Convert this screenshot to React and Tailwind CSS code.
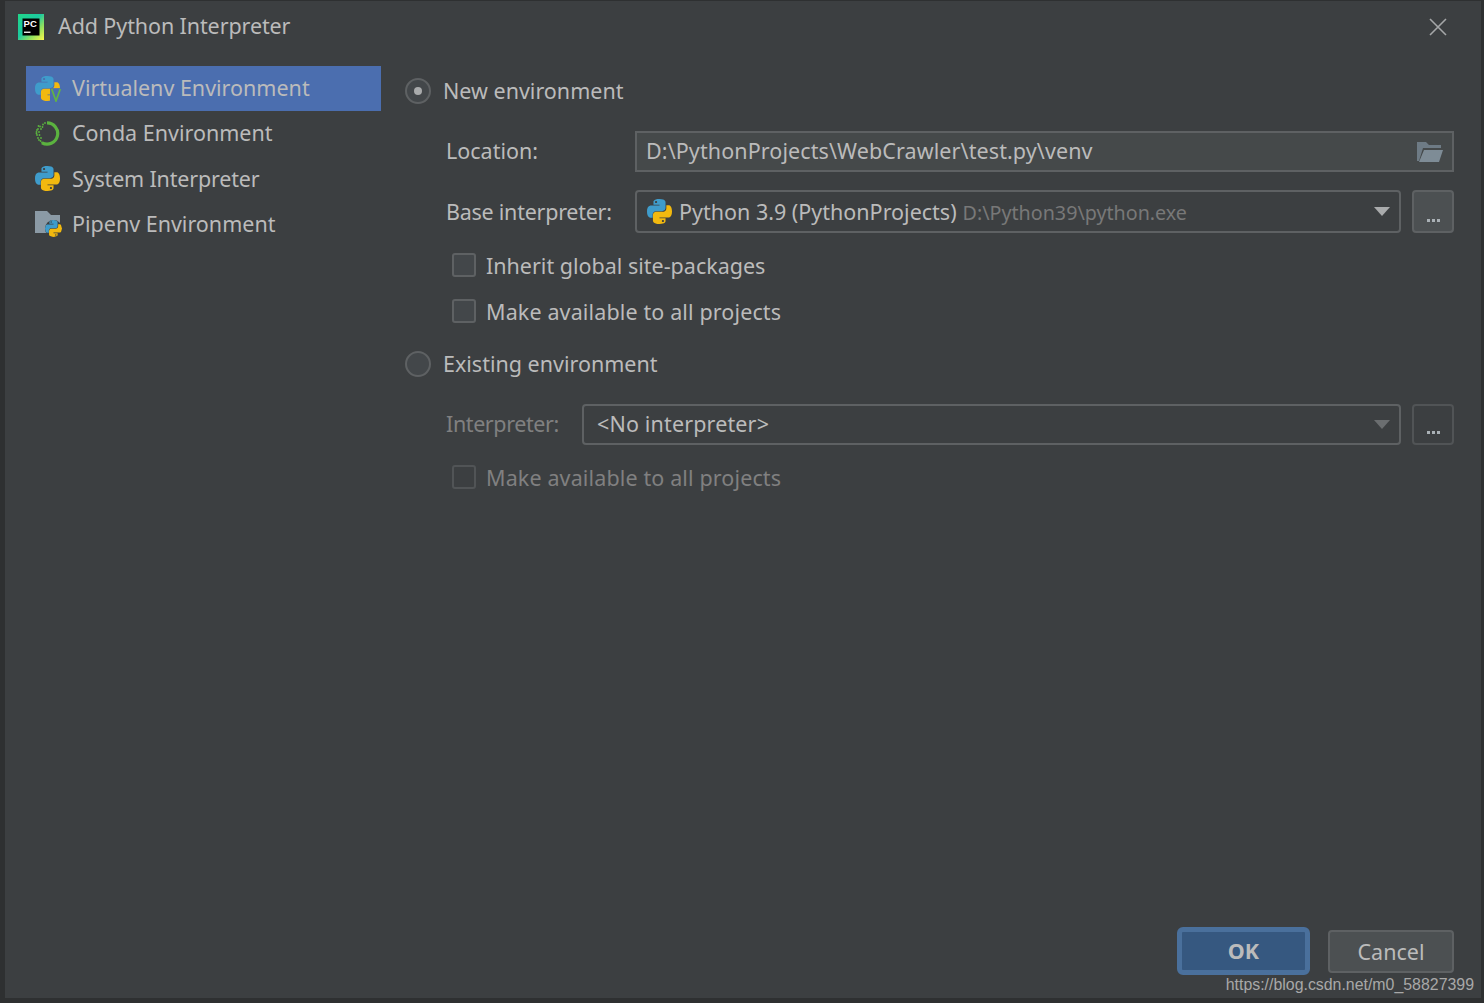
const font = { fontFamily: '"Noto Sans", sans-serif' };

function PythonIcon({ className }) {
  return (
    <svg viewBox="0 0 24 24" className={className}>
      <path fill="#3f9ccb" d="M11.914 0C5.82 0 6.2 2.656 6.2 2.656l.007 2.752h5.814v.826H3.9S0 5.789 0 11.969c0 6.18 3.403 5.96 3.403 5.96h2.03v-2.867s-.109-3.42 3.35-3.42h5.766s3.24.052 3.24-3.148V3.202S18.28 0 11.913 0zM8.708 1.85c.578 0 1.046.47 1.046 1.052 0 .581-.468 1.051-1.046 1.051-.579 0-1.046-.47-1.046-1.051 0-.582.467-1.052 1.046-1.052z" />
      <path fill="#f2b90f" d="M12.087 24c6.092 0 5.712-2.656 5.712-2.656l-.007-2.752h-5.814v-.826h8.123s3.9.445 3.9-5.735c0-6.18-3.404-5.96-3.404-5.96h-2.03v2.867s.109 3.42-3.35 3.42H8.95s-3.24-.052-3.24 3.148v5.292S5.72 24 12.087 24zm3.206-1.85c-.579 0-1.046-.47-1.046-1.052 0-.581.467-1.051 1.046-1.051.578 0 1.046.47 1.046 1.051 0 .582-.468 1.052-1.046 1.052z" />
    </svg>
  );
}

function VirtualenvIcon() {
  return (
    <div className="relative w-[27px] h-[26px]">
      <PythonIcon className="w-[25px] h-[25px]" />
      <svg viewBox="0 0 14 16" className="absolute left-[15px] top-[12px] w-[12px] h-[14px]">
        <path d="M0 0h14v16H0z" fill="#4b6eaf" />
        <path d="M2 1l5 14 5-14" fill="none" stroke="#62b543" strokeWidth="2" />
      </svg>
    </div>
  );
}

function CondaIcon() {
  const dots = [[3, 8], [5, 5.5], [1.5, 11], [4, 11], [2, 14], [4.5, 14], [3, 17], [6, 17], [6, 8], [8, 3.5], [10, 2], [5.5, 20], [2, 9], [3.5, 5], [1.5, 12.5], [7.5, 6], [4, 19], [7, 21.5]];
  return (
    <svg viewBox="0 0 25 25" className="w-[25px] h-[25px]">
      <path d="M12 1.9A10.6 10.6 0 1 1 7 21.8" fill="none" stroke="#5bb33f" strokeWidth="3.2" />
      {dots.map(([x, y], i) => (
        <circle key={i} cx={x} cy={y} r="0.9" fill="#5bb33f" />
      ))}
    </svg>
  );
}

function PipenvIcon() {
  return (
    <div className="relative w-[27px] h-[26px]">
      <svg viewBox="0 0 25 22" className="w-[25px] h-[22px]">
        <path d="M0 0h12l4 4h9v18H0z" fill="#8b9aa5" />
      </svg>
      <PythonIcon className="absolute left-[10px] top-[9px] w-[17px] h-[17px] bg-[#3c3f41] rounded-full" />
    </div>
  );
}

function PyCharmIcon() {
  return (
    <svg viewBox="0 0 26 26" className="w-[26px] h-[26px]">
      <defs>
        <linearGradient id="pc" x1="0" y1="0" x2="1" y2="1">
          <stop offset="0" stopColor="#21d789" />
          <stop offset="0.45" stopColor="#1cc9a0" />
          <stop offset="0.7" stopColor="#8fe05f" />
          <stop offset="1" stopColor="#fcf84a" />
        </linearGradient>
      </defs>
      <rect width="26" height="26" fill="url(#pc)" />
      <rect x="4.5" y="4.5" width="17" height="17" fill="#000" />
      <text x="5.6" y="13" fill="#fff" fontSize="9.5" fontWeight="700" style={{ fontFamily: '"Liberation Sans", sans-serif' }}>PC</text>
      <rect x="6" y="17.6" width="6.5" height="1.3" fill="#fff" />
    </svg>
  );
}

function Radio({ checked }) {
  return (
    <span className="w-[26px] h-[26px] rounded-full border-2 border-[#5e6163] bg-[#43474a] flex items-center justify-center shrink-0">
      {checked && <span className="w-[8px] h-[8px] rounded-full bg-[#a9abac]" />}
    </span>
  );
}

function Check({ label, disabled, wide }) {
  return (
    <div className="h-[24px] pl-[47px] flex items-center gap-[10px]">
      <span className={`w-[24px] h-[24px] rounded-[3px] border-2 ${disabled ? 'border-[#515456] bg-[#3c3f41]' : 'border-[#5e6163] bg-[#43474a]'}`} />
      <span className={`pt-[2px] ${wide ? 'tracking-[0.13px]' : ''} ${disabled ? 'text-[#808080]' : ''}`}>{label}</span>
    </div>
  );
}

function Arrow({ color }) {
  return (
    <svg viewBox="0 0 16 9" className="w-[16px] h-[9px]">
      <path d="M0 0h16L8 9z" fill={color} />
    </svg>
  );
}

function DotsButton({ filled }) {
  return (
    <button className={`w-[42px] ml-[11px] h-full rounded-[4px] border-2 flex items-end justify-center pb-[9px] gap-[2px] ${filled ? 'border-[#5e6163] bg-[#4c5052]' : 'border-[#515456] bg-[#3c3f41]'}`}>
      <span className="w-[3px] h-[3px] bg-[#a9b0b5]" />
      <span className="w-[3px] h-[3px] bg-[#a9b0b5]" />
      <span className="w-[3px] h-[3px] bg-[#a9b0b5]" />
    </button>
  );
}

function SideItem({ icon, label, selected, textClass }) {
  return (
    <div className={`h-[45.2px] flex items-center pl-[9px] gap-[10px] ${selected ? 'bg-[#4b6eaf]' : ''}`}>
      <span className="w-[27px] flex justify-start">{icon}</span>
      <span className={textClass}>{label}</span>
    </div>
  );
}

export default function App() {
  return (
    <div className="relative w-[1484px] h-[1003px] bg-[#2e3031] text-[#bbbbbb] text-[21.5px] overflow-hidden" style={font}>
      <div className="ml-[5px] mr-[3px] mt-[1px] h-[997px] bg-[#3c3f41] flex flex-col">
        {/* title bar */}
        <div className="h-[51px] flex items-center pl-[13px] pr-[34px]">
          <PyCharmIcon />
          <span className="ml-[14px] tracking-[-0.1px]">Add Python Interpreter</span>
          <svg viewBox="0 0 18 18" className="ml-auto w-[18px] h-[18px]">
            <path d="M1 1l16 16M17 1L1 17" stroke="#a5a7a8" strokeWidth="1.6" />
          </svg>
        </div>

        <div className="flex flex-1 pt-[14px]">
          {/* left list */}
          <div className="w-[355px] ml-[21px]">
            <SideItem selected label="Virtualenv Environment" icon={<VirtualenvIcon />} />
            <SideItem label="Conda Environment" textClass="pb-[2px]" icon={<CondaIcon />} />
            <SideItem label="System Interpreter" textClass="tracking-[-0.17px]" icon={<PythonIcon className="w-[25px] h-[25px]" />} />
            <SideItem label="Pipenv Environment" icon={<PipenvIcon />} />
          </div>

          {/* right form */}
          <div className="w-[1049px] ml-[24px]">
            <div className="h-[50px] flex items-center gap-[12px]">
              <Radio checked />
              <span>New environment</span>
            </div>

            <div className="mt-[15px] h-[41px] pl-[41px] flex items-center">
              <span className="w-[189px]">Location:</span>
              <div className="flex-1 h-full border-2 border-[#5e6163] bg-[#45494a] flex items-center pl-[9px] pr-[9px]">
                <span className="tracking-[0.1px]">D:\PythonProjects\WebCrawler\test.py\venv</span>
                <svg viewBox="0 0 26 20" className="ml-auto w-[26px] h-[20px]">
                  <path d="M0 0h9l3 3h12v3H6L2 19H0z" fill="#6e7b85" />
                  <path d="M7 8h19l-4 12H2z" fill="#7e8c96" />
                </svg>
              </div>
            </div>

            <div className="mt-[18px] h-[43px] pl-[41px] flex items-center">
              <span className="w-[189px] pt-[2px] tracking-[-0.25px]">Base interpreter:</span>
              <div className="flex-1 h-full rounded-[4px] border-2 border-[#5e6163] flex items-center pl-[10px] pr-[9px]">
                <PythonIcon className="w-[25px] h-[25px]" />
                <span className="ml-[7px] pt-[2px]">Python 3.9 (PythonProjects)</span>
                <span className="ml-[6px] pt-[2px] text-[19.7px] text-[#787878]">D:\Python39\python.exe</span>
                <span className="ml-auto"><Arrow color="#a9abac" /></span>
              </div>
              <DotsButton filled />
            </div>

            <div className="mt-[20px]"><Check label="Inherit global site-packages" /></div>
            <div className="mt-[22px]"><Check wide label="Make available to all projects" /></div>

            <div className="mt-[28px] h-[26px] flex items-center gap-[12px]">
              <Radio />
              <span>Existing environment</span>
            </div>

            <div className="mt-[27px] h-[41px] pl-[41px] flex items-center">
              <span className="w-[136px] tracking-[-0.4px] text-[#808080]">Interpreter:</span>
              <div className="flex-1 h-full rounded-[4px] border-2 border-[#5e6163] flex items-center pl-[13px] pr-[9px]">
                <span className="tracking-[0.15px]">&lt;No interpreter&gt;</span>
                <span className="ml-auto"><Arrow color="#6b6e70" /></span>
              </div>
              <DotsButton />
            </div>

            <div className="mt-[20px]"><Check disabled wide label="Make available to all projects" /></div>
          </div>
        </div>

        {/* footer buttons */}
        <div className="h-[71px] flex items-start justify-end pr-[27px]">
          <button className="w-[133px] h-[48px] pt-[1px] rounded-[6px] bg-[#365880] border-[5px] border-[#4a709c] font-bold">OK</button>
          <button className="w-[126px] h-[43px] pt-[1px] mt-[3px] ml-[18px] rounded-[4px] bg-[#4c5052] border-2 border-[#5e6163]">Cancel</button>
        </div>
      </div>

      {/* csdn watermark */}
      <span className="absolute right-[10px] top-[975px] text-[15.9px] leading-[20px] text-[#a8a8a8]" style={{ fontFamily: '"Liberation Sans", sans-serif' }}>
        https://blog.csdn.net/m0_58827399
      </span>
    </div>
  );
}
